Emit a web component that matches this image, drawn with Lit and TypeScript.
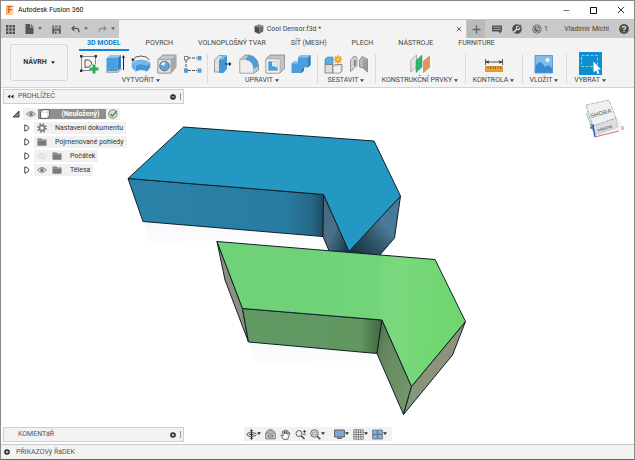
import { LitElement, html, svg, css, nothing, TemplateResult } from "lit";
import { customElement } from "lit/decorators.js";

type Art = ReturnType<typeof svg>;

const art: Record<string, { w: number; h: number; body: Art }> = {
  // quick access bar
  apps: {
    w: 9, h: 9,
    body: svg`<path fill="#4d4d4d" d="M0 0h2.4v2.4H0zM3.3 0h2.4v2.4H3.3zM6.6 0H9v2.4H6.6zM0 3.3h2.4v2.4H0zM3.3 3.3h2.4v2.4H3.3zM6.6 3.3H9v2.4H6.6zM0 6.6h2.4V9H0zM3.3 6.6h2.4V9H3.3zM6.6 6.6H9V9H6.6z"/>`,
  },
  file: {
    w: 9, h: 10,
    body: svg`<path fill="#555" d="M0.5 0h4.5v3.5h3.5V10h-8z"/><path fill="#555" d="M5.8 0L8.5 2.7H5.8z"/>`,
  },
  save: {
    w: 9, h: 9,
    body: svg`<path fill="#555" d="M0.3 0.5h8.4v8.2H0.3z"/><path fill="#c6c6c6" d="M1.6 0.5h5.8v3.3H1.6zM2.2 5.6h4.6v3.1H2.2z"/><path fill="#555" d="M2.5 1.6h4v.8h-4zM3 6.4h1.6v2.3H3z"/>`,
  },
  undo: {
    w: 9, h: 8,
    body: svg`<path fill="none" stroke="#555" stroke-width="1.3" d="M3.4 1L1 3.4l2.4 2.4M1 3.4h4.5q2.6.2 2.4 3.8"/>`,
  },
  redo: {
    w: 9, h: 8,
    body: svg`<path fill="none" stroke="#8d8d8d" stroke-width="1.1" d="M5.6 1L8 3.4L5.6 5.8M8 3.4H3.5Q.9 3.6 1.1 7.2"/>`,
  },
  doc: {
    w: 10, h: 10,
    body: svg`<path fill="#8a8a8a" d="M0.5 2L5 .3l4.5 1.5L5.2 3.6z"/><path fill="#4a4a4a" d="M0.5 2l4.7 1.6V10L.7 8z"/><path fill="#6a6a6a" d="M9.5 1.8L5.2 3.6V10l4-2.6z"/>`,
  },
  close: { w: 6, h: 6, body: svg`<path stroke="#666" stroke-width="1" d="M.8 .8l4.4 4.4M5.2 .8L.8 5.2"/>` },
  plus: { w: 9, h: 9, body: svg`<path stroke="#666" stroke-width="1.4" d="M4.5 .5v8M.5 4.5h8"/>` },
  comment: {
    w: 10, h: 9,
    body: svg`<path fill="#555" d="M0 .5h10v6H8.8v2.2L6.4 6.5H0z"/><path fill="#bbb" d="M1.3 1.8h7.4v1H1.3zM1.3 4h7.4v1H1.3z" opacity=".7"/>`,
  },
  wrench: {
    w: 10, h: 10,
    body: svg`<circle cx="5" cy="5" r="4.8" fill="#4d4d4d"/><path stroke="#d6d6d6" stroke-width="1.6" d="M1.6 8.4L5.2 4.8"/><circle cx="6.1" cy="3.9" r="1.7" fill="none" stroke="#d6d6d6" stroke-width="1.2"/><path stroke="#4d4d4d" stroke-width="1.3" d="M6.4 3.6L9 1"/>`,
  },
  clock: {
    w: 10, h: 10,
    body: svg`<circle cx="5" cy="5" r="4.6" fill="#666"/><circle cx="5" cy="5" r="3.4" fill="none" stroke="#c4c4c4" stroke-width=".9"/><path fill="none" stroke="#e0e0e0" d="M5 2.4V5.2H7.4"/>`,
  },
  help: {
    w: 10, h: 10,
    body: svg`<circle cx="5" cy="5" r="4.9" fill="#4d4d4d"/><path fill="none" stroke="#ddd" stroke-width="1.2" d="M3.3 3.8Q3.4 2.3 5 2.3T6.7 3.8Q6.7 4.7 5 5.2V6.2M5 6.9v1.3"/>`,
  },
  // window buttons
  min: { w: 7, h: 7, body: svg`<path stroke="#777" d="M.5 3.5h6"/>` },
  max: { w: 7, h: 7, body: svg`<path fill="none" stroke="#111" d="M.5 .5h6v6h-6z"/>` },
  quit: { w: 8, h: 8, body: svg`<path stroke="#111" stroke-width=".9" d="M.8 .8l6.2 6.2M7 .8L.8 7"/>` },
  // ribbon
  sketch: {
    w: 20, h: 20,
    body: svg`<g fill="none" stroke="#6b6b6b" stroke-width=".8"><path d="M2.500 3v13M3 16.500h9M3 2.500h13M16.500 3v7"/><path stroke="#555" stroke-width="1" d="M6 13.500V6h3.500q4 1.500 3 4.500-2 3-6.500 3z"/></g><path fill="#333" d="M1 1h2.500v2.500H1zM15.500 1H18v2.500h-2.500zM1 15.500h2.500V18H1z"/><path fill="#2fab57" d="M13.500 10.500h3v3h3v3h-3v3h-3v-3h-3v-3h3z"/>`,
  },
  extrude: {
    w: 20, h: 20,
    body: svg`<path fill="#8cc4ec" d="M1.500 4L5 1h11l-3.500 3z"/><path fill="#4c9fdd" d="M1.500 4h11v13h-11z"/><path fill="#2f83c4" d="M12.500 4L16 1v13l-3.500 3z"/><path fill="#ddd" stroke="#777" stroke-width=".5" d="M1.500 17h11l3.500-3v1.500L13 18.500H1.500z"/><path stroke="#222" d="M18.500 3v13"/><path fill="#222" d="M16.900 3.800h3.100L18.500 1z"/>`,
  },
  revolve: {
    w: 20, h: 20,
    body: svg`<path fill="none" stroke="#444" stroke-width=".9" d="M1.500 6Q4 2 10 2T18.500 6"/><path fill="#222" d="M0.500 4l.5 3.500L4 6z"/><path fill="#77b8e8" d="M.800 8.500Q10 2.500 19.200 8.500L16 11.500Q10 8.500 4.500 11.500z"/><path fill="#4397d8" d="M4.500 11.500q5.500-3 11.500 0l3.200-3v5l-3.200 4q-6-3-11.500 0z"/><path fill="#62ace4" d="M.800 8.500l3.700 3V17.500L.8 13.500z"/>`,
  },
  hole: {
    w: 20, h: 20,
    body: svg`<path fill="#c8c8c8" stroke="#777" stroke-width=".7" d="M1 5.500L6 1h13v12l-5 6H1z"/><path fill="#e2e2e2" stroke="#888" stroke-width=".6" d="M1 5.500h13V19H1z"/><path fill="#a8a8a8" d="M14 5.500L19 1v12l-5 6z"/><circle cx="7.500" cy="12" r="4.800" fill="#5aa6df" stroke="#666" stroke-width=".9"/><path fill="#e8f2f9" d="M3.500 11Q5 7.500 8.500 8L7 12q-1-1.500-3.500-1z"/>`,
  },
  pattern: {
    w: 20, h: 20,
    body: svg`<path stroke="#555" stroke-width="1" stroke-dasharray="3 1" d="M5 4h9M3 6v9M5 16.500h9"/><path fill="#fff" stroke="#555" stroke-width=".8" d="M1.500 2.500h3.500V6H1.500z"/><path fill="#4a9edc" d="M14.500 2h4v4.200h-4zM1 14.500h4v4.200H1zM14.500 14.500h4v4.200h-4z"/>`,
  },
  press: {
    w: 20, h: 20,
    body: svg`<path fill="#e2e2e2" stroke="#777" stroke-width=".7" d="M1.500 18V6L6 1.500h5V18z"/><path fill="#3f97da" d="M6 5.500L10.500 1H14v14l-4 4H6z"/><path fill="#7cc0ef" d="M6 5.500L10.500 1H14l-4 4.500z"/><path stroke="#222" d="M12 10h5"/><path fill="#222" d="M16 7.800v4.400l2.500-2.200z"/>`,
  },
  fillet: {
    w: 20, h: 20,
    body: svg`<path fill="#c6c6c6" stroke="#777" stroke-width=".7" d="M1 19V5.500L6 1h4q9 2 9.500 11v4l-4 3z"/><path fill="#eee" stroke="#999" stroke-width=".5" d="M1 19V5.500h5q8.500 1 8.500 9.500v4z"/><path fill="#4a9edc" d="M6 5.500L10 1q9 2 9.500 11L14.500 15Q14.500 6.500 6 5.500z"/>`,
  },
  shell: {
    w: 20, h: 20,
    body: svg`<path fill="#c4c4c4" stroke="#777" stroke-width=".7" d="M1 5L5 1h14.500v13.500L15 19H1z"/><path fill="#f0f0f0" stroke="#888" stroke-width=".5" d="M1 5h14v14H1z"/><path fill="#d8e9f6" stroke="#9ab" stroke-width=".4" d="M3.500 7.500h9v9h-9z"/><path fill="#4a9edc" d="M3.500 7.500H7V12l5.500 1.500v3h-9z"/>`,
  },
  combine: {
    w: 20, h: 20,
    body: svg`<path fill="#4a9edc" d="M0.500 9.500L3 7.500h4V3.500L9.500 1H19.500v10L17 13.500H13V16.500L10.500 19H.500z"/><path fill="#86c3ef" d="M7 3.500L9.500 1h10L17 3.500zM.500 9.500L3 7.500h4v2z"/><path fill="#2d80c2" d="M17 3.500L19.500 1v10L17 13.500zM10.500 15.500l2.500-2v3L10.500 19z"/>`,
  },
  joint: {
    w: 20, h: 20,
    body: svg`<path fill="#5aa9e2" stroke="#3984bd" stroke-width=".6" d="M2 5l2.500-2H10v7.500H2z"/><path fill="#ddd" stroke="#666" stroke-width=".7" d="M2 10.500h8V19H2zM10 12.500l2-2h7V17l-2 2h-7z"/><path fill="#f4f4f4" d="M10.500 13h6.500v5.500h-6.500z"/><path fill="#f39a1e" d="M15 .300l1 2.600 2.600-1-1.100 2.500 2.500 1-2.500 1 1.100 2.500-2.600-1-1 2.500-1-2.500-2.600 1 1.100-2.500-2.500-1 2.500-1-1.100-2.500 2.600 1z"/><circle cx="15" cy="5.300" r="1.400" fill="#ffd352"/>`,
  },
  hinge: {
    w: 20, h: 20,
    body: svg`<path fill="#cfcfcf" stroke="#777" stroke-width=".7" d="M1.500 17.500V6.500L5 2q3 .5 3 2.500v7L5.500 14z"/><path fill="#b9b9b9" stroke="#777" stroke-width=".7" d="M18.500 18V5L13 2.500 10.500 6v7l3.500 1z"/><path fill="#8a8a8a" d="M14 5l4.500 1v12L14 14z" opacity=".6"/><path fill="#777" d="M5 6h1.500v6H5z"/>`,
  },
  planes: {
    w: 20, h: 20,
    body: svg`<path fill="#e4e4e4" stroke="#888" stroke-width=".6" d="M.800 18V6.500L6.500 1v11.500z"/><path fill="#35b36b" stroke="#279456" stroke-width=".5" d="M6 18.500V6.500L12 1v12z"/><path fill="#e0935f" stroke="#bf7648" stroke-width=".5" d="M13.500 18.500V7L19.500 2v11.500z"/>`,
  },
  measure: {
    w: 20, h: 20,
    body: svg`<path stroke="#444" stroke-width=".9" d="M1.500 5v6M18.500 5v6M2 8h16"/><path fill="#333" d="M1.700 8l3-1.800v3.600zM18.300 8l-3-1.800v3.600z"/><path fill="#f0a12b" stroke="#b87412" stroke-width=".6" d="M1.500 12.500h17v5h-17z"/><path stroke="#7c4c05" stroke-width=".8" d="M4 12.500v2M6.500 12.500v2.500M9 12.500v2M11.500 12.500v2.500M14 12.500v2M16.500 12.500v2.500"/>`,
  },
  picture: {
    w: 20, h: 20,
    body: svg`<path fill="#7ebdf0" stroke="#3f8fd2" stroke-width=".8" d="M1 1.500h17.500V19H1z"/><path fill="#3a8bd0" d="M1.300 12.500Q6 5 9.500 11q1.500 3 3 1 2-2.500 5.700 2.500v4.200H1.300z"/><circle cx="13.500" cy="6" r="2" fill="#f7f7e6"/>`,
  },
  select: {
    w: 23, h: 23,
    body: svg`<path fill="#0f8ed0" d="M0 0h23v23H0z"/><path fill="none" stroke="#6fd8d0" stroke-dasharray="3 1.500" d="M2.500 3.500h16v11h-16z"/><path fill="#fff" d="M14.500 9.500v11l2.500-2.200 1.600 3.700 1.900-.8-1.700-3.600h3.200z"/>`,
  },
  // browser tree
  eye: {
    w: 10, h: 8,
    body: svg`<path fill="#e6e6e6" stroke="#777" stroke-width=".9" d="M.600 4Q5-.800 9.400 4 5 8.800.600 4z"/><circle cx="5" cy="4" r="1.800" fill="#777"/>`,
  },
  eyeOff: {
    w: 10, h: 8,
    body: svg`<path fill="none" stroke="#cfcfcf" stroke-width=".8" d="M.600 4Q5-.800 9.400 4 5 8.800.600 4zM1.500 1l7 6"/>`,
  },
  gear: {
    w: 10, h: 10,
    body: svg`<circle cx="5" cy="5" r="4" fill="none" stroke="#777" stroke-width="1.800" stroke-dasharray="1.600 1.540"/><circle cx="5" cy="5" r="2.500" fill="none" stroke="#777" stroke-width="1.400"/>`,
  },
  folder: {
    w: 10, h: 8,
    body: svg`<path fill="#7b7b7b" d="M.500 .500h4l1 1H9.500v6.300h-9z"/><path stroke="#c4c4c4" stroke-width=".6" d="M.500 2.200h9"/>`,
  },
  part: {
    w: 10, h: 10,
    body: svg`<path fill="#fff" stroke="#444" stroke-width=".8" d="M.600 3L3 .700h6.300v6L7.500 9.300H.600z"/><path fill="none" stroke="#bbb" stroke-width=".5" d="M.800 3.200h6.500v6M7.300 3.200L9.200.900"/>`,
  },
  check: {
    w: 10, h: 10,
    body: svg`<circle cx="4.800" cy="5" r="4.200" fill="#d8e0d8" stroke="#777" stroke-width=".9"/><path fill="none" stroke="#4f8a55" stroke-width="1.400" d="M2.600 5l1.800 2L9 1.800"/>`,
  },
  open: { w: 8, h: 8, body: svg`<path fill="#888" stroke="#222" stroke-width=".8" d="M7 1v6H1z"/>` },
  shut: { w: 6, h: 8, body: svg`<path fill="#fff" stroke="#333" stroke-width=".9" d="M.800 .800Q5 2 5 4T.800 7.200z"/>` },
  fold: { w: 7, h: 5, body: svg`<path fill="#222" d="M3.200 .500v4L.500 2.500zM6.500 .500v4L3.800 2.500z"/>` },
  minus: { w: 6, h: 6, body: svg`<circle cx="3" cy="3" r="2.800" fill="#222"/><path stroke="#fff" stroke-width=".9" d="M1.500 3h3"/>` },
  add: { w: 6, h: 6, body: svg`<circle cx="3" cy="3" r="2.800" fill="#222"/><path stroke="#fff" stroke-width=".8" d="M1.500 3h3M3 1.500v3"/>` },
  // navigation bar
  orbit: {
    w: 11, h: 11,
    body: svg`<ellipse cx="5.500" cy="5.500" rx="4.800" ry="1.900" fill="none" stroke="#444" stroke-width=".9"/><path stroke="#333" d="M5.500 .800v9.400M3.500 5.500h4"/><path fill="#333" d="M3.800 2.200h3.400L5.500 0zM3.800 8.800h3.400L5.500 11z"/>`,
  },
  look: {
    w: 11, h: 11,
    body: svg`<path fill="#ddd" stroke="#555" stroke-width=".8" d="M.800 4h9.400v5.800H.800z"/><path fill="none" stroke="#555" stroke-width=".8" d="M2 4V2h7v2M3.500 .800h4M3 6h5v2H3z"/>`,
  },
  hand: {
    w: 11, h: 11,
    body: svg`<path fill="#fff" stroke="#444" stroke-width=".8" d="M3.500 10.300L.900 6.300q.600-1 1.700.200L3.200 7 2.500 2.300q.800-.800 1.200.200L4.500 5 4.600 1.200q.800-.800 1.200 0L6 5l1-3.300q.900-.500 1.100.400L7.700 5.400l1.200-1.800q.900-.100.800.700L8.300 8.500l-.600 1.800z"/>`,
  },
  zoom: {
    w: 11, h: 11,
    body: svg`<circle cx="4" cy="4.500" r="3" fill="#eee" stroke="#555" stroke-width=".9"/><path stroke="#444" stroke-width="1.400" d="M6.200 6.700L9.500 10"/><path stroke="#333" stroke-width=".8" d="M8 2.500h3M9.500 1v3M8 5.200h3"/>`,
  },
  fit: {
    w: 11, h: 11,
    body: svg`<circle cx="4.500" cy="4.500" r="3.800" fill="#eee" stroke="#555" stroke-width=".9"/><path fill="none" stroke="#666" stroke-width=".7" d="M2.800 3h3.400v3H2.800z"/><path stroke="#444" stroke-width="1.500" d="M7.200 7.200L10.300 10.300"/>`,
  },
  display: {
    w: 11, h: 11,
    body: svg`<path fill="#7fa6d4" stroke="#555" stroke-width=".9" d="M.600 1h9.800v7H.600z"/><path fill="#666" d="M3 8.500h5v1.500H3z"/>`,
  },
  grid: {
    w: 11, h: 11,
    body: svg`<path fill="#fff" stroke="#666" stroke-width=".8" d="M.800 .800h9.400v9.400H.800zM3.200 .800v9.400M5.500 .800v9.400M7.800 .800v9.400M.800 3.200h9.400M.800 5.500h9.400M.800 7.800h9.400"/>`,
  },
  views: {
    w: 11, h: 11,
    body: svg`<path fill="#8db2dc" stroke="#5b6c80" stroke-width=".8" d="M.600 1h4.700v4.300H.600zM5.700 1h4.700v4.300H5.700zM.600 5.700h4.700V10H.600zM5.700 5.700h4.700V10H5.700z"/>`,
  },
};

const icon = (name: string): TemplateResult => {
  const a = art[name];
  return html`<svg width=${a.w} height=${a.h} viewBox="0 0 ${a.w} ${a.h}" aria-hidden="true">${a.body}</svg>`;
};

const caret = html`<svg width="4" height="4" viewBox="0 0 4 4" aria-hidden="true"><path fill="currentColor" d="M0 .2h4L2 3z"/></svg>`;

const reset = css`
  * { box-sizing: border-box; }
  svg { display: block; flex: none; }
  button {
    display: flex;
    align-items: center;
    justify-content: center;
    margin: 0;
    padding: 0;
    border: 0;
    background: none;
    color: inherit;
    font: inherit;
    white-space: nowrap;
  }
`;

@customElement("quick-bar")
class QuickBar extends LitElement {
  static styles = [reset, css`
    :host { display: flex; height: 18px; background: #c9c9c9; color: #444; }
    .tools { display: flex; align-items: center; width: 118px; padding-left: 5px; gap: 10px; color: #666; }
    .pair { gap: 4px; }
    .tab {
      flex: 1; display: flex; align-items: center; justify-content: space-between;
      background: #f2f2f2; padding-right: 4px; margin-right: 1px;
    }
    .name { flex: 1; display: flex; justify-content: center; align-items: center; gap: 3px; }
    .new { width: 18px; background: #bababa; }
    .side { display: flex; align-items: center; gap: 10px; width: 149px; padding: 0 5px 0 7px; }
    .jobs { gap: 2px; }
    .user { margin-left: auto; }
  `];
  render() {
    return html`
      <div class="tools">
        <button aria-label="Datový panel">${icon("apps")}</button>
        <button class="pair" aria-label="Soubor">${icon("file")}${caret}</button>
        <button aria-label="Uložit">${icon("save")}</button>
        <button class="pair" aria-label="Zpět">${icon("undo")}${caret}</button>
        <button class="pair" aria-label="Znovu">${icon("redo")}${caret}</button>
      </div>
      <div class="tab">
        <div class="name">${icon("doc")}<span>Cool Densor.f3d *</span></div>
        <button aria-label="Zavřít kartu">${icon("close")}</button>
      </div>
      <button class="new" aria-label="Nová karta">${icon("plus")}</button>
      <div class="side">
        <button aria-label="Poznámky">${icon("comment")}</button>
        <button aria-label="Rozšíření">${icon("wrench")}</button>
        <button class="jobs" aria-label="Stav úloh">${icon("clock")}<span>1</span></button>
        <button class="user">Vladimír Michl</button>
        <button aria-label="Nápověda">${icon("help")}</button>
      </div>`;
  }
}

const tabs = ["3D MODEL", "POVRCH", "VOLNOPLOŠNÝ TVAR", "SÍŤ (MESH)", "PLECH", "NÁSTROJE", "FURNITURE"];
const groups = [
  { label: "VYTVOŘIT", icons: ["sketch", "extrude", "revolve", "hole", "pattern"] },
  { label: "UPRAVIT", icons: ["press", "fillet", "shell", "combine"] },
  { label: "SESTAVIT", icons: ["joint", "hinge"] },
  { label: "KONSTRUKČNÍ PRVKY", icons: ["planes"] },
  { label: "KONTROLA", icons: ["measure"] },
  { label: "VLOŽIT", icons: ["picture"] },
  { label: "VYBRAT", icons: ["select"] },
];

@customElement("tool-ribbon")
class ToolRibbon extends LitElement {
  static styles = [reset, css`
    :host {
      display: flex; height: 50px; background: #f3f3f3; color: #444;
      border-bottom: 1px solid #d2d2d2;
    }
    .space {
      width: 58px; height: 37px; margin: 6px 7px 0 9px; gap: 4px; font-weight: 700; color: #333;
      border: 1px solid #d6d6d6; border-radius: 3px;
    }
    .body { flex: 1; display: flex; flex-direction: column; }
    .tabs { display: flex; gap: 9px; padding-left: 4px; height: 13px; }
    .tabs button { padding: 0 8px; border-bottom: 2px solid transparent; }
    .tabs .on { color: #0a80cf; border-color: #1286d6; font-weight: 700; }
    .groups {
      flex: 1; padding-right: 20px; display: grid;
      grid-template-columns: 132fr 110fr 58fr 90fr 57fr 44fr 48fr;
    }
    .group { display: flex; flex-direction: column; align-items: center; min-width: 0; }
    .group + .group { background: linear-gradient(#dadada, #dadada) 0 3px / 1px 30px no-repeat; }
    .icons { display: flex; align-items: center; gap: 6px; height: 25px; }
    .menu { gap: 2px; height: 9px; }
  `];
  render() {
    return html`
      <button class="space">NÁVRH ${caret}</button>
      <div class="body">
        <div class="tabs" role="tablist">
          ${tabs.map((t, i) => html`<button role="tab" aria-selected=${i === 0} class=${i === 0 ? "on" : ""}>${t}</button>`)}
        </div>
        <div class="groups">
          ${groups.map((g) => html`
            <div class="group">
              <div class="icons">${g.icons.map((n) => html`<button aria-label=${g.label}>${icon(n)}</button>`)}</div>
              <button class="menu">${g.label} ${caret}</button>
            </div>`)}
        </div>
      </div>`;
  }
}

@customElement("dock-title")
class DockTitle extends LitElement {
  static properties = { label: {}, mark: {}, fold: { type: Boolean } };
  declare label: string;
  declare mark: string;
  declare fold: boolean;
  static styles = [reset, css`
    :host {
      display: flex; align-items: center; width: 181px; height: 15px; padding: 0 1px 0 3px;
      background: #f2f2f2; border: 1px solid #cfcfcf; color: #555;
    }
    .lead { width: 11px; display: flex; }
    .text { flex: 1; }
    .grip { width: 2px; height: 7px; margin-left: 4px; border-left: 1px solid #999; }
  `];
  render() {
    return html`
      <span class="lead">${this.fold ? html`<button aria-label="Sbalit">${icon("fold")}</button>` : nothing}</span>
      <span class="text">${this.label}</span>
      <button aria-label="Přepnout panel">${icon(this.mark)}</button>
      <span class="grip"></span>`;
  }
}

const rows = [
  { text: "Nastavení dokumentu", icons: ["gear"] },
  { text: "Pojmenované pohledy", icons: ["folder"] },
  { text: "Počátek", icons: ["eyeOff", "folder"] },
  { text: "Tělesa", icons: ["eye", "folder"] },
];

@customElement("model-tree")
class ModelTree extends LitElement {
  static styles = [reset, css`
    :host { display: flex; flex-direction: column; gap: 2px; padding-top: 4px; color: #333; }
    .row { display: flex; align-items: center; height: 12px; gap: 3px; padding-left: 20px; }
    .root { padding-left: 9px; }
    .toggle { width: 8px; }
    .item { display: flex; align-items: center; gap: 5px; height: 12px; padding: 0 3px; background: #f1f1f1; }
    .item span { padding-left: 3px; }
    .root .item { padding: 0 2px 0 3px; gap: 2px; }
    .active {
      width: 68px; height: 10px; gap: 2px; justify-content: flex-start; padding-left: 2px;
      background: #8f8f8f; color: #fff; font-weight: 700;
    }
    .active span { flex: 1; }
  `];
  render() {
    return html`
      <div class="row root">
        <button class="toggle" aria-label="Sbalit">${icon("open")}</button>
        <div class="item">
          <button aria-label="Viditelnost">${icon("eye")}</button>
          <button class="active">${icon("part")}<span>(Neuložený)</span></button>
          ${icon("check")}
        </div>
      </div>
      ${rows.map((r) => html`
        <div class="row">
          <button class="toggle" aria-label="Rozbalit">${icon("shut")}</button>
          <div class="item">${r.icons.map(icon)}<span>${r.text}</span></div>
        </div>`)}`;
  }
}

const tools: [string, string, boolean][] = [
  ["orbit", "Orbit", true],
  ["look", "Pohled na", false],
  ["hand", "Posun", false],
  ["zoom", "Zoom", false],
  ["fit", "Přizpůsobit", true],
  ["display", "Zobrazení", true],
  ["grid", "Mřížka", true],
  ["views", "Výřezy", true],
];

@customElement("nav-tools")
class NavTools extends LitElement {
  static styles = [reset, css`
    :host { display: flex; align-items: center; gap: 4px; height: 14px; padding: 0 5px 0 2px; background: #f1f1f1; color: #333; }
    .split { margin-left: 5px; }
  `];
  render() {
    return tools.map(([name, label, drop]) => html`
      <button class=${name === "display" ? "split" : ""} aria-label=${label}>
        ${icon(name)}${drop ? caret : nothing}
      </button>`);
  }
}

@customElement("model-view")
class ModelView extends LitElement {
  static styles = css`
    :host { display: block; }
    svg { display: block; width: 100%; height: 100%; }
    .edge { stroke: #10202a; stroke-width: 1; stroke-linejoin: round; }
  `;
  render() {
    return html`<svg viewBox="1 88 633 356" preserveAspectRatio="xMinYMin slice" role="img" aria-label="Model">
      <defs>
        <linearGradient id="bf" x1="0" x2="1"><stop offset="0" stop-color="#2b82a9"/><stop offset=".8" stop-color="#297ca2"/><stop offset=".94" stop-color="#256887"/><stop offset="1" stop-color="#1d4a61"/></linearGradient>
        <linearGradient id="bi" x1="0" x2="1" y1="0" y2="1"><stop offset="0" stop-color="#44667a"/><stop offset=".5" stop-color="#4a7189"/><stop offset="1" stop-color="#12303f"/></linearGradient>
        <linearGradient id="br" gradientUnits="userSpaceOnUse" x1="352" y1="252" x2="398" y2="212"><stop offset="0" stop-color="#16323f"/><stop offset=".4" stop-color="#33566b"/><stop offset=".7" stop-color="#4b7b97"/><stop offset="1" stop-color="#44799a"/></linearGradient>
        <linearGradient id="gf" x1="0" x2="1"><stop offset="0" stop-color="#629a64"/><stop offset=".85" stop-color="#619661"/><stop offset="1" stop-color="#3f663f"/></linearGradient>
        <linearGradient id="gi" x1="0" x2="1" y1="0" y2="1"><stop offset="0" stop-color="#4c6c4b"/><stop offset=".3" stop-color="#67885f"/><stop offset="1" stop-color="#739a6c"/></linearGradient>
        <linearGradient id="gr" gradientUnits="userSpaceOnUse" x1="406" y1="405" x2="460" y2="335"><stop offset="0" stop-color="#84987a"/><stop offset="1" stop-color="#918f7c"/></linearGradient>
        <linearGradient id="gt" gradientUnits="userSpaceOnUse" x1="300" y1="300" x2="450" y2="310"><stop offset="0" stop-color="#70d277"/><stop offset=".5" stop-color="#73d579"/><stop offset=".62" stop-color="#7ad97e"/><stop offset="1" stop-color="#70d66f"/></linearGradient>
        <linearGradient id="sh" x1="0" x2="0" y1="0" y2="1"><stop offset="0" stop-color="#f6f7fa"/><stop offset="1" stop-color="#fff"/></linearGradient>
      </defs>
      <path fill="url(#sh)" d="M143 222L325 237 331 252 217 250 150 244z"/>
      <path fill="url(#sh)" d="M249 343L377 354 384 370 256 364z"/>
      <path class="edge" fill="url(#bf)" d="M128 178.500L323.500 194.500 323 236.500 143 221.500z"/>
      <path class="edge" fill="url(#bi)" d="M323.500 194.500L349 251.500 344 254 330 253 323 236.500z"/>
      <path class="edge" fill="url(#br)" d="M349 251.500L400.500 196 394.500 238 379 256z"/>
      <path class="edge" fill="#2498c3" d="M183.500 127L374 141 400.500 196 349 251.500 323.500 194.500 128 178.500z"/>
      <path class="edge" fill="#8b9080" d="M217 241.500L242.500 308.500 248.500 342 225 280z"/>
      <path class="edge" fill="url(#gf)" d="M242.500 308.500L382 320 377 353.500 248.500 342z"/>
      <path class="edge" fill="url(#gi)" d="M382 320L411.500 386.500 403.500 414.500 377 353.500z"/>
      <path class="edge" fill="url(#gr)" d="M411.500 386.500L465.500 321.500 452.500 355 403.500 414.500z"/>
      <path class="edge" fill="url(#gt)" d="M217 241.500L435 259.500 465.500 321.500 411.500 386.500 382 320 242.500 308.500z"/>
    </svg>`;
  }
}

@customElement("view-cube")
class ViewCube extends LitElement {
  static styles = css`
    :host { display: block; }
    svg { display: block; }
    .face { fill: #eef0f2; stroke: #9a9da1; stroke-width: .7; stroke-dasharray: 4 1; }
    .side { fill: #dcdfe2; stroke: #b4b7bb; stroke-width: .6; }
    text { font: 700 6px "Liberation Sans", Arial, sans-serif; fill: #84888d; }
    .small { font-size: 4px; fill: #70747a; }
  `;
  render() {
    return html`<svg width="46" height="42" viewBox="0 0 46 42" role="img" aria-label="Kostka pohledů">
      <path fill="#f4f4f4" d="M15 38L37 32 41 24 36 18z"/>
      <path fill="#d2d5d8" d="M5 7L12 27 15 36 7 17z"/>
      <path class="side" d="M12 27L35 19 37 28 15 36z"/>
      <path class="face" d="M5 6L28 1 35 19 12 27z"/>
      <text transform="translate(10 19) rotate(-15)">SHORA</text>
      <text class="small" transform="translate(17 33) rotate(-17)">PŘEDNÍ</text>
      <path stroke="#8fd49a" stroke-width="1" d="M13 34L5 14"/>
      <path stroke="#e06a6a" stroke-width="1" d="M14 38L38 32"/>
      <path stroke="#3451c8" stroke-width="1.400" d="M14 38L12 27"/>
      <path stroke="#3451c8" stroke-width="1" d="M9 26h4L9 29h4" fill="none"/>
      <path stroke="#e06a6a" stroke-width=".8" d="M40 27l3 4M43 27l-3 4"/>
    </svg>`;
  }
}

@customElement("app-root")
class AppRoot extends LitElement {
  static styles = [reset, css`
    :host {
      display: flex; flex-direction: column; height: 100vh; background: #fff;
      border: 1px solid #8a8a8a; border-bottom-color: #666; box-sizing: border-box;
      font: 7px/9px Roboto, "Liberation Sans", sans-serif; color: #333;
    }
    .title { display: flex; align-items: center; height: 19px; padding: 0 9px 0 5px; gap: 4px; color: #111; border-bottom: 1px solid #c6c6c6; }
    .logo {
      width: 8px; height: 10px; display: grid; place-items: center; border-radius: 1px;
      background: linear-gradient(90deg, #f6b27c, #fbe3cd); color: #d9600c; font-size: 9px; font-weight: 700;
    }
    .caption { flex: 1; margin: 0; font: inherit; }
    .win { display: flex; align-items: center; gap: 20px; }
    .canvas { position: relative; flex: 1; min-height: 0; display: flex; flex-direction: column; justify-content: space-between; overflow: hidden; }
    .scene { position: absolute; inset: 0; }
    .cube { position: absolute; right: 7px; top: 11px; }
    .browser { position: relative; padding: 1px 0 0 2px; align-self: flex-start; }
    .dock { position: relative; display: grid; grid-template-columns: 1fr auto 1fr; align-items: end; padding-bottom: 2px; }
    .notes { margin-left: 2px; }
    .nav { margin-bottom: 1px; }
    .command { display: flex; align-items: center; gap: 6px; height: 15px; padding-left: 3px; background: #f3f3f3; border-top: 1px solid #c8c8c8; color: #555; }
  `];
  render() {
    return html`
      <header class="title">
        <span class="logo" aria-hidden="true">F</span>
        <h1 class="caption">Autodesk Fusion 360</h1>
        <div class="win">
          <button aria-label="Minimalizovat">${icon("min")}</button>
          <button aria-label="Maximalizovat">${icon("max")}</button>
          <button aria-label="Zavřít">${icon("quit")}</button>
        </div>
      </header>
      <quick-bar></quick-bar>
      <tool-ribbon></tool-ribbon>
      <main class="canvas">
        <model-view class="scene"></model-view>
        <view-cube class="cube"></view-cube>
        <section class="browser">
          <dock-title label="PROHLÍŽEČ" mark="minus" fold></dock-title>
          <model-tree></model-tree>
        </section>
        <div class="dock">
          <dock-title class="notes" label="KOMENTáŘ" mark="add"></dock-title>
          <nav-tools class="nav"></nav-tools>
        </div>
      </main>
      <footer class="command">
        <button aria-label="Rozbalit příkazový řádek">${icon("add")}</button>
        <span>PŘIKAZOVý ŘáDEK</span>
      </footer>`;
  }
}
